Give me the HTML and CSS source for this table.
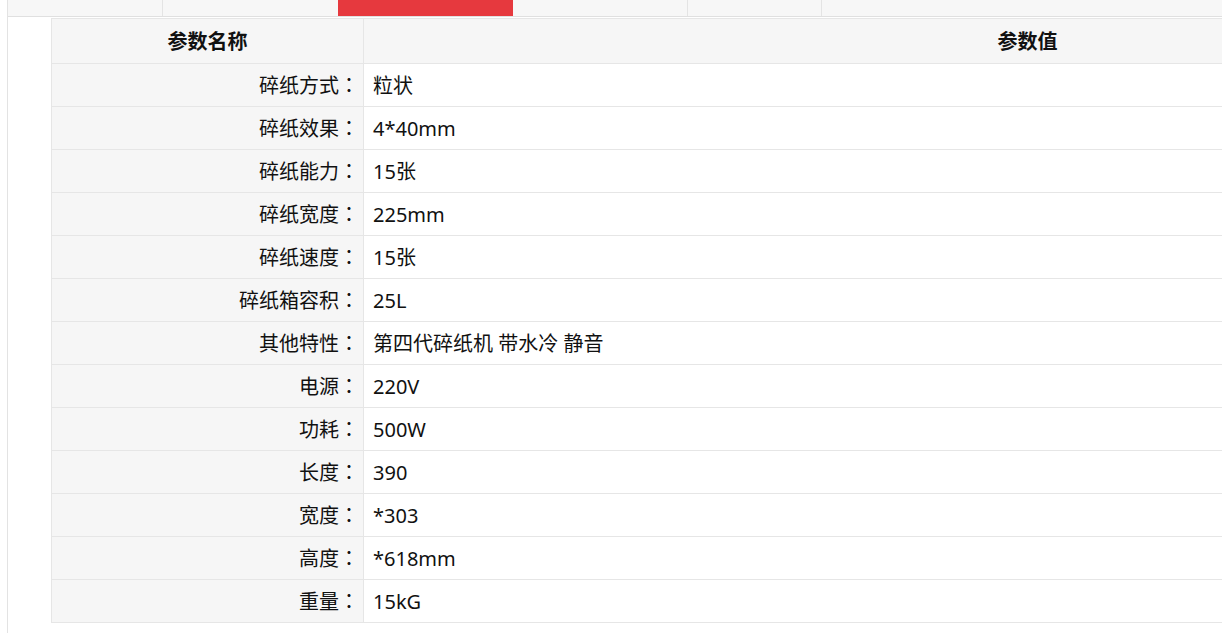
FILE: index.html
```html
<!DOCTYPE html>
<html lang="zh-CN">
<head>
<meta charset="utf-8">
<title>参数</title>
<link rel="stylesheet" href="styles.css">
</head>
<body>
<div class="wrap">
  <div class="tabs">
    <div class="tab t1"></div>
    <div class="tab t2"></div>
    <div class="tab t3 active"></div>
    <div class="tab t4"></div>
    <div class="tab t5"></div>
    <div class="tab t6"></div>
  </div>
  <table class="params">
    <thead>
      <tr><th class="name">参数名称</th><th class="val">参数值</th></tr>
    </thead>
    <tbody>
      <tr><td class="name">碎纸方式<span class="colon">：</span></td><td class="val">粒状</td></tr>
      <tr><td class="name">碎纸效果<span class="colon">：</span></td><td class="val">4*40mm</td></tr>
      <tr><td class="name">碎纸能力<span class="colon">：</span></td><td class="val">15张</td></tr>
      <tr><td class="name">碎纸宽度<span class="colon">：</span></td><td class="val">225mm</td></tr>
      <tr><td class="name">碎纸速度<span class="colon">：</span></td><td class="val">15张</td></tr>
      <tr><td class="name">碎纸箱容积<span class="colon">：</span></td><td class="val">25L</td></tr>
      <tr><td class="name">其他特性<span class="colon">：</span></td><td class="val">第四代碎纸机 带水冷 静音</td></tr>
      <tr><td class="name">电源<span class="colon">：</span></td><td class="val">220V</td></tr>
      <tr><td class="name">功耗<span class="colon">：</span></td><td class="val">500W</td></tr>
      <tr><td class="name">长度<span class="colon">：</span></td><td class="val">390</td></tr>
      <tr><td class="name">宽度<span class="colon">：</span></td><td class="val">*303</td></tr>
      <tr><td class="name">高度<span class="colon">：</span></td><td class="val">*618mm</td></tr>
      <tr><td class="name">重量<span class="colon">：</span></td><td class="val">15kG</td></tr>
    </tbody>
  </table>
</div>
</body>
</html>
```

FILE: styles.css
```css
html, body {
  margin: 0;
  padding: 0;
  background: #fff;
  overflow: hidden;
  font-family: "Noto Sans", "Noto Sans CJK SC", sans-serif;
  color: #111;
}

.wrap {
  margin-left: 7px;
  border-left: 1px solid #e3e3e3;
  min-height: 633px;
  width: 1700px;
}

.tabs {
  display: flex;
  height: 16px;
  background: #f7f7f7;
  border-bottom: 1px solid #e0e0e0;
  margin-bottom: 1px;
}

.tab {
  height: 16px;
  border-right: 1px solid #e4e4e4;
  box-sizing: border-box;
}

.t1 { width: 155px; }
.t2 { width: 175px; border-right: none; }
.t3 { width: 175px; }
.t4 { width: 175px; }
.t5 { width: 134px; }
.t6 { flex: 1; border-right: none; }

.tab.active {
  background: #e6393e;
  border-right: 1px solid #e6393e;
}

.params {
  margin-left: 43px;
  width: 1641px;
  border-collapse: collapse;
  border: 1px solid #e0e0e0;
  font-size: 20px;
}

.params th,
.params td {
  border: 1px solid #e6e6e6;
  padding: 1px 10px 0;
  line-height: 24px;
}

.params th {
  height: 43px;
  background: #f6f6f6;
  font-weight: bold;
  text-align: center;
  font-size: 20px;
}

.params td {
  height: 41px;
}

.params th.name {
  width: 291px;
}

.params td.name {
  background: #f6f6f6;
  text-align: right;
  padding-right: 4px;
}

.colon {
  font-family: "Noto Sans CJK JP", sans-serif;
  display: inline-block;
  width: 20px;
  text-align: center;
}

.params td.val {
  background: #fff;
  text-align: left;
  padding-left: 9px;
}
```
